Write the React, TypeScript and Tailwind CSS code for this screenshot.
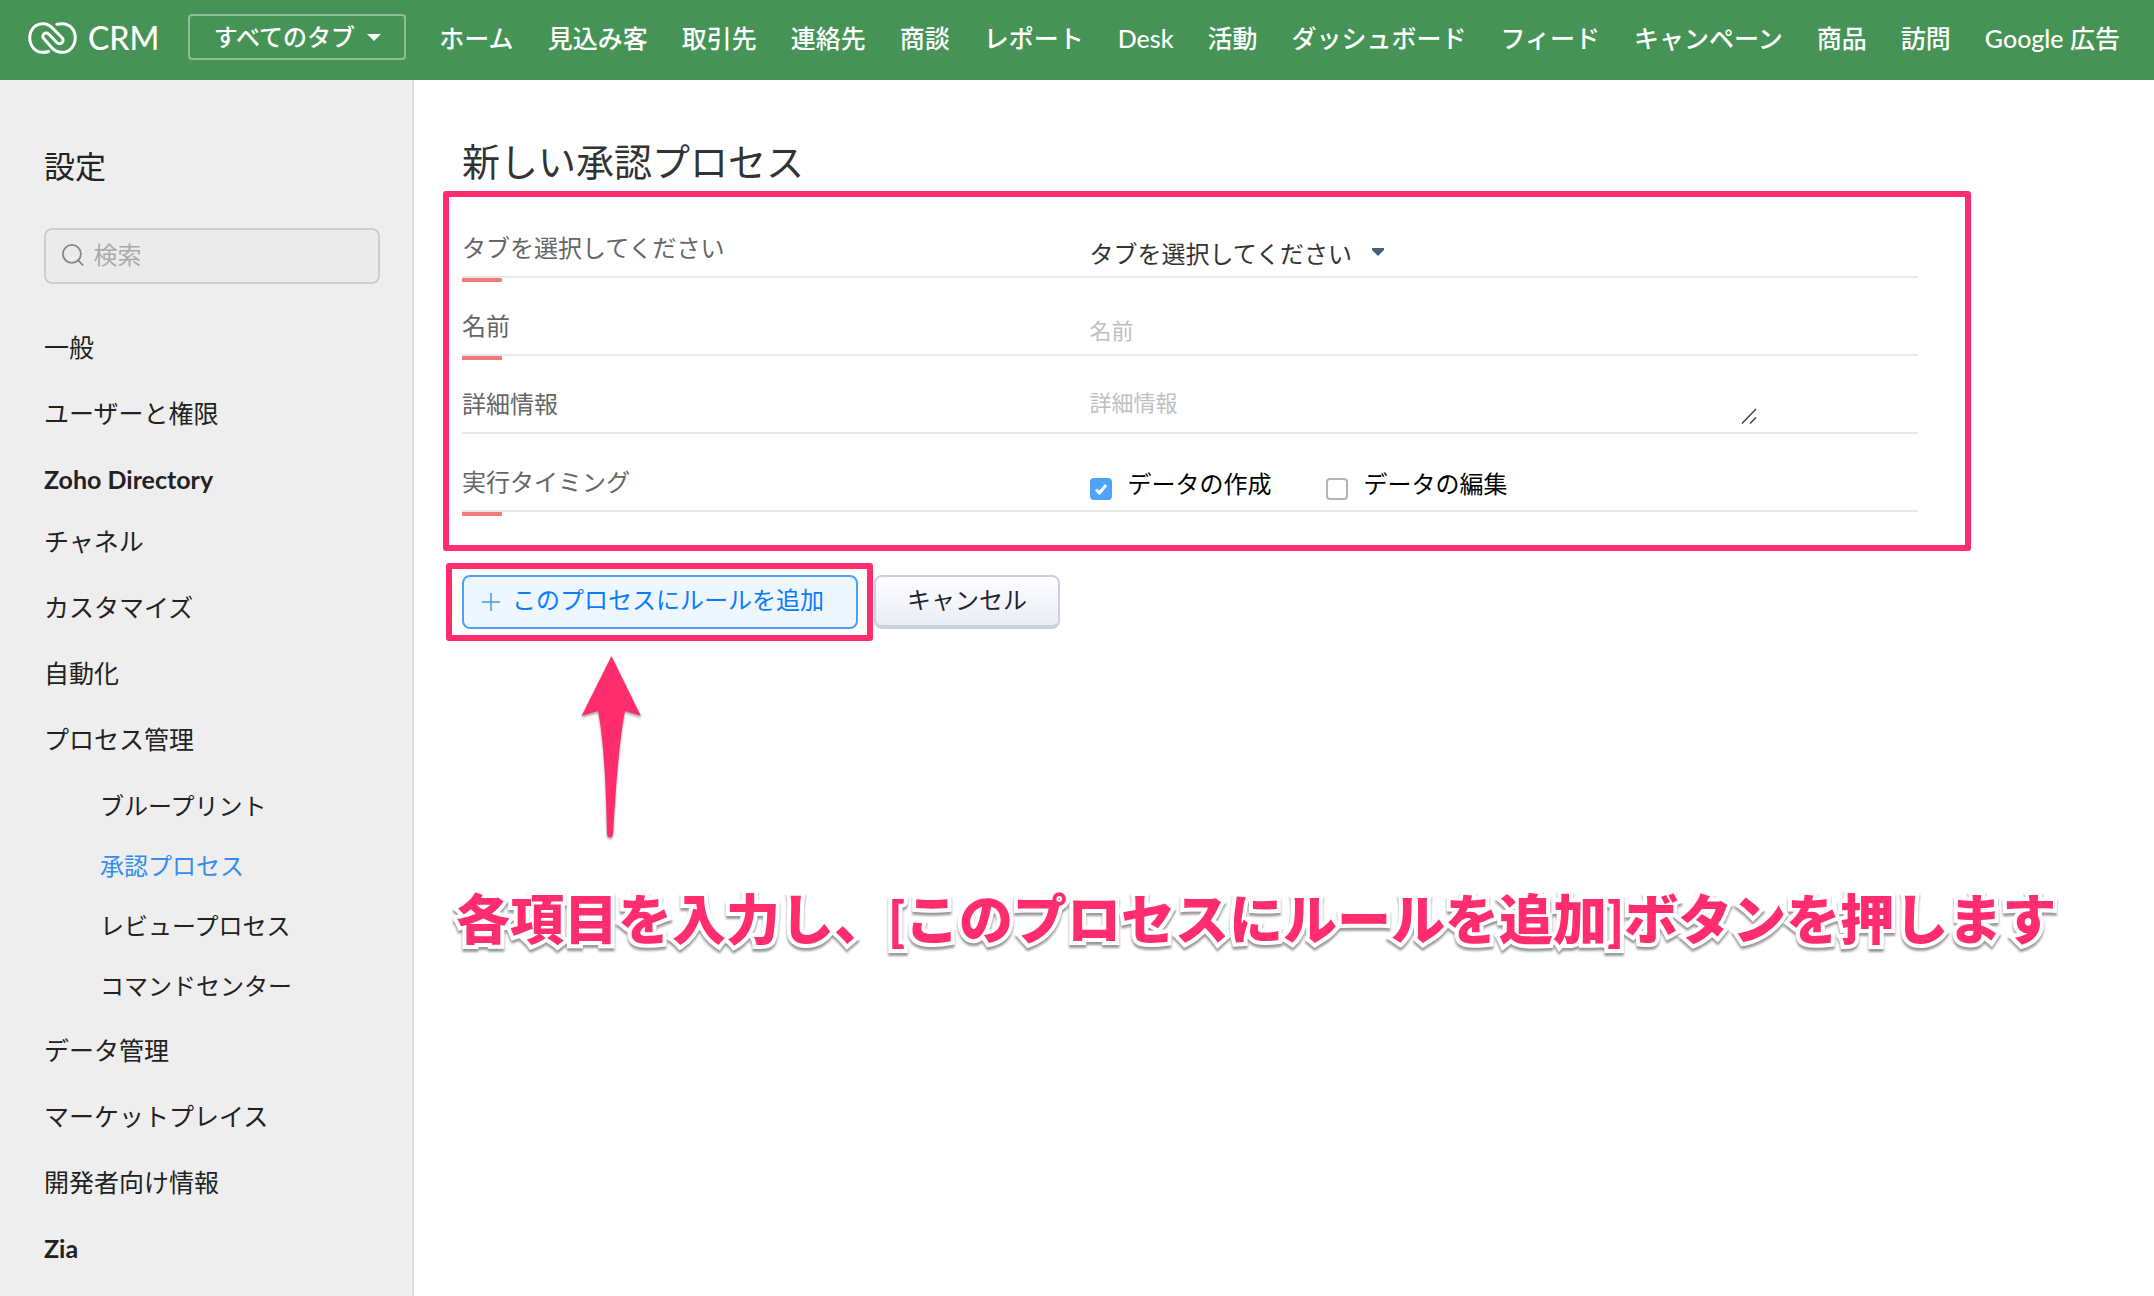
import type { ReactNode } from "react";

const tabs = [
  "ホーム", "見込み客", "取引先", "連絡先", "商談", "レポート", "Desk",
  "活動", "ダッシュボード", "フィード", "キャンペーン", "商品", "訪問", "Google 広告",
];

const processItems = ["ブループリント", "承認プロセス", "レビュープロセス", "コマンドセンター"];

function Logo() {
  return (
    <svg viewBox="35 41 148 97" className="h-8 w-[49px]" fill="none" stroke="currentColor" strokeWidth="9" strokeLinecap="round" aria-hidden="true">
      <path d="M97 130C92 133 86 133 80 133C56 133 40 112 40 89C40 65 56 46 80 46C96 46 104 53 112 62L138 89C148 100 132 113 122 103L99 79C88 68 73 81 83 92L107 119C115 128 124 133 138 133C162 133 178 112 178 89C178 65 162 46 138 46C132 46 127 46 122 48" />
    </svg>
  );
}

function Header() {
  return (
    <header className="flex h-20 items-center whitespace-nowrap bg-[#459455] pb-1 pl-7 font-medium text-white">
      <a href="#" className="flex items-center gap-[11px]">
        <Logo />
        <span className="text-[32px] leading-9">CRM</span>
      </a>
      <button className="mb-0.5 ml-[29px] flex h-[46px] w-[218px] items-center justify-center gap-3 rounded border-2 border-white/40 text-2xl">
        すべてのタブ
        <svg viewBox="0 0 14 7" className="w-3.5" fill="currentColor" aria-hidden="true"><path d="M0 0h14L7 7z" /></svg>
      </button>
      <nav className="ml-[33px] flex gap-[34px] text-[25px] leading-9">
        {tabs.map((t) => <a key={t} href="#">{t}</a>)}
      </nav>
    </header>
  );
}

function SideItem({ label, className = "h-[66px]" }: { label: string; className?: string }) {
  return (
    <li className={className}>
      <a href="#" className="leading-9">{label}</a>
    </li>
  );
}

function Sidebar() {
  return (
    <aside className="w-[414px] shrink-0 border-r-2 border-[#dcdcdc] bg-[#eeeeee] pl-11 pr-8 text-[#222]">
      <h2 className="mt-[62px] text-[31px] leading-[48px]">設定</h2>
      <label className="mt-[38px] flex h-14 items-center gap-2.5 rounded-lg border-2 border-[#ccc] bg-[#ebebeb] pb-0.5 pl-4">
        <svg viewBox="0 0 24 25" className="w-6" fill="none" stroke="#888" strokeWidth="2" aria-hidden="true">
          <circle cx="11" cy="11" r="10" /><path d="m18 18 5.500 6" />
        </svg>
        <input aria-label="検索" placeholder="検索" className="w-full min-w-0 bg-transparent text-2xl outline-none placeholder:text-[#aaa]" />
      </label>
      <ul className="mt-[45px] text-[25px] leading-9">
        <SideItem label="一般" />
        <SideItem label="ユーザーと権限" />
        <SideItem label="Zoho Directory" className="h-[62px] font-bold" />
        <SideItem label="チャネル" />
        <SideItem label="カスタマイズ" />
        <SideItem label="自動化" />
        <li>
          <a href="#" className="block h-[67px]">プロセス管理</a>
          <ul className="pb-1 pl-14 text-2xl leading-9">
            {processItems.map((p) => (
              <li key={p} className="h-[60px]">
                <a href="#" className={p === "承認プロセス" ? "text-[#338cf0]" : ""}>{p}</a>
              </li>
            ))}
          </ul>
        </li>
        <SideItem label="データ管理" />
        <SideItem label="マーケットプレイス" />
        <SideItem label="開発者向け情報" />
        <SideItem label="Zia" className="font-bold" />
      </ul>
    </aside>
  );
}

function Row({ label, htmlFor, required, children }: { label: string; htmlFor?: string; required?: boolean; children: ReactNode }) {
  return (
    <div className="relative grid h-[78px] grid-cols-[431fr_569fr] border-b-2 border-[#e8e8e8] text-2xl">
      <label htmlFor={htmlFor} className="pt-[30px] leading-9 text-[#666]">{label}</label>
      <div className="flex flex-col justify-end">{children}</div>
      {required && <span className="absolute left-0 top-full mt-0.5 h-1 w-10 bg-[#f37b79]" />}
    </div>
  );
}

function Check({ label, defaultChecked }: { label: string; defaultChecked?: boolean }) {
  return (
    <label className="flex gap-4 leading-9">
      <span className="relative mt-3 size-[22px]">
        <input type="checkbox" defaultChecked={defaultChecked} className="peer block size-[22px] appearance-none rounded border-2 border-[#b5b5b5] bg-white checked:border-[#4ea3fb] checked:bg-[#4ea3fb]" />
        <svg viewBox="0 0 22 22" className="pointer-events-none absolute inset-0 hidden peer-checked:block" fill="none" stroke="#fff" strokeWidth="3" aria-hidden="true">
          <path d="m6 11.500 3.500 3.500 6.500-8" />
        </svg>
      </span>
      {label}
    </label>
  );
}

function ApprovalForm() {
  return (
    <div className="ml-[29px] mr-[183px] mt-1 rounded-[3px] border-[6px] border-[#ff2d6e] pb-[33px] pl-[13px] pr-[47px] pt-[3px]">
      <Row label="タブを選択してください" htmlFor="tab" required>
        <div className="flex items-center pb-1">
          <select id="tab" className="h-9 appearance-none bg-transparent text-[#333] outline-none">
            <option>タブを選択してください</option>
          </select>
          <svg viewBox="0 0 12 8" className="mb-1 ml-[18px] w-3" fill="#3d607d" aria-hidden="true"><path d="M0 0h12v2L6 8 0 2z" /></svg>
        </div>
      </Row>
      <Row label="名前" htmlFor="name" required>
        <input id="name" placeholder="名前" className="mb-1.5 h-9 w-full bg-transparent text-[22px] outline-none placeholder:text-[#bfbfbf]" />
      </Row>
      <Row label="詳細情報" htmlFor="detail">
        <div className="relative mb-1 w-[81%]">
          <textarea id="detail" placeholder="詳細情報" rows={1} className="block h-[43px] w-full resize-none overflow-hidden bg-transparent text-[22px] leading-9 outline-none placeholder:text-[#bfbfbf]" />
          <svg viewBox="0 0 16 16" className="absolute bottom-1 right-1 w-4" stroke="#444" strokeWidth="1.500" aria-hidden="true"><path d="M1 15.500 15 1M9 15.500 15 9.500" /></svg>
        </div>
      </Row>
      <Row label="実行タイミング" required>
        <div className="flex gap-[54px] pb-2 text-black">
          <Check label="データの作成" defaultChecked />
          <Check label="データの編集" />
        </div>
      </Row>
    </div>
  );
}

export default function App() {
  return (
    <div lang="ja" className="flex min-h-screen flex-col bg-white font-[Lato,'Noto_Sans_CJK_JP',sans-serif]">
      <Header />
      <div className="flex grow">
        <Sidebar />
        <main className="min-w-0 grow">
          <h1 className="ml-12 mt-[55px] text-[38px] leading-[52px] text-[#333]">新しい承認プロセス</h1>
          <ApprovalForm />
          <div className="ml-8 mt-3 flex items-center">
            <div className="rounded-[3px] border-[6px] border-[#ff2d6e] py-1.5 pl-2.5 pr-[9px]">
              <button className="flex h-[54px] w-[396px] items-center gap-3 rounded-lg border-2 border-[#4da1fb] bg-[#eef6ff] pb-1 pl-[18px] text-2xl text-[#0b7bff]">
                <svg viewBox="0 0 18 18" className="mt-1 w-[18px]" stroke="#4a9fd8" strokeWidth="1.500" aria-hidden="true"><path d="M9 0v18M0 9h18" /></svg>
                このプロセスにルールを追加
              </button>
            </div>
            <button className="ml-px h-[54px] w-[186px] rounded-lg border-2 border-b-4 border-[#ccd0de] bg-linear-to-b from-white to-[#e9ecf6] pb-0.5 text-2xl text-[#1d2433]">キャンセル</button>
          </div>
          <svg viewBox="0 0 60 182" className="ml-[167px] mt-[15px] w-[60px] drop-shadow-[0_2px_1px_rgba(0,0,0,0.35)]" fill="#ff2d6e" aria-hidden="true">
            <path d="M30.500 0 60 60 44 55C38 85 35 130 32 179q-3 5-6 0C25 130 23 85 17 55L.5 60z" />
          </svg>
          <p className="ml-[42px] mt-[42px] whitespace-nowrap text-[54px] font-black leading-[80px] text-[#ff2d6e] drop-shadow-[0_3px_1px_rgba(0,0,0,0.4)] [-webkit-text-stroke:8px_white] [paint-order:stroke_fill]">
            各項目を入力し、[このプロセスにルールを追加]ボタンを押します
          </p>
        </main>
      </div>
    </div>
  );
}
